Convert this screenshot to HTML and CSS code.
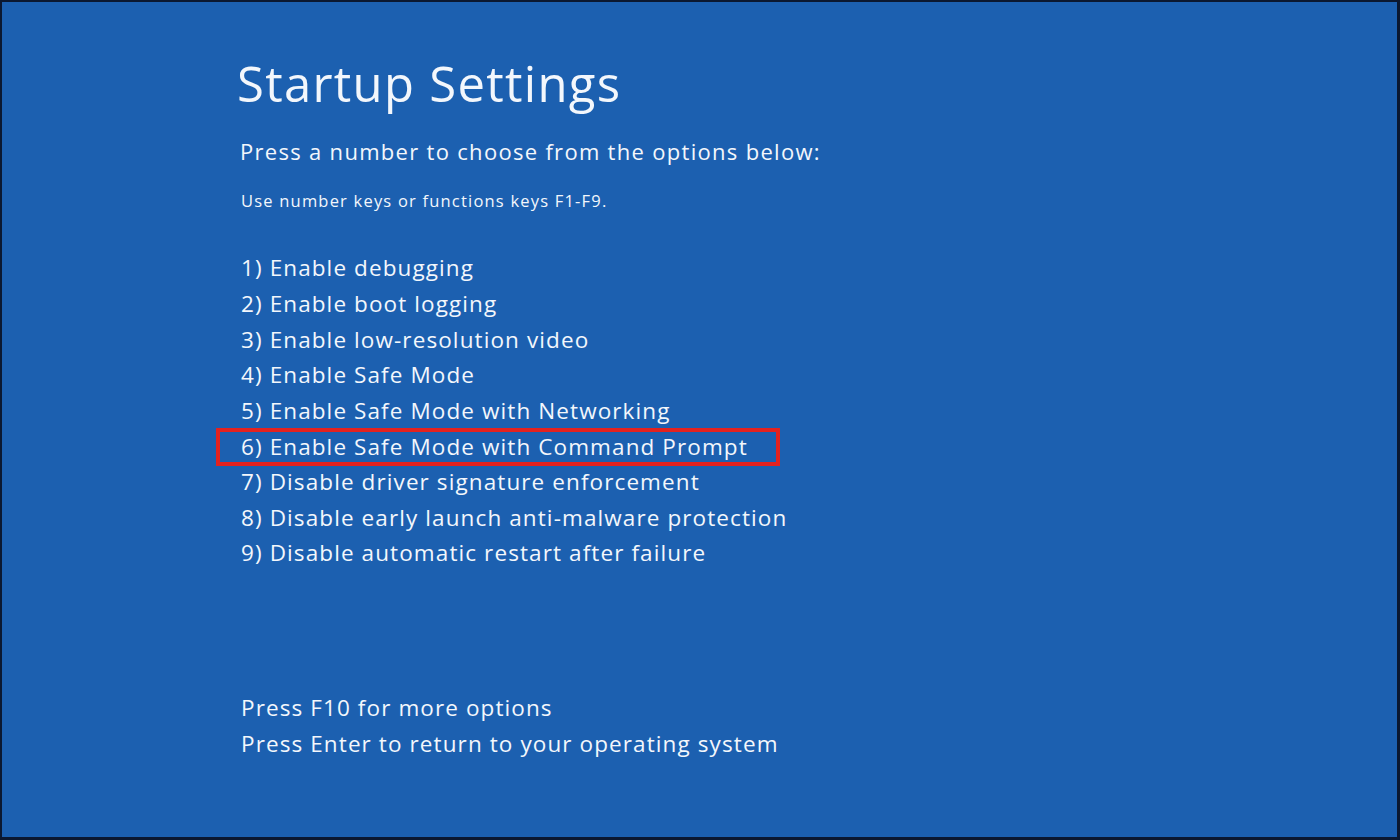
FILE: index.html
```html
<!DOCTYPE html>
<html lang="en">
<head>
    <meta charset="UTF-8">
    <meta name="viewport" content="width=device-width, initial-scale=1.0">
    <title>Startup Settings</title>
    <link rel="stylesheet" href="styles.css">
</head>
<body>
    <div class="pantalla">
        <h1 class="titulo">Startup Settings</h1>
        <p class="subtitulo">Press a number to choose from the options below:</p>
        <p class="nota">Use number keys or functions keys F1-F9.</p>
        <ul class="opciones">
            <li>1) Enable debugging</li>
            <li>2) Enable boot logging</li>
            <li>3) Enable low-resolution video</li>
            <li>4) Enable Safe Mode</li>
            <li>5) Enable Safe Mode with Networking</li>
            <li class="marcada"><span>6) Enable Safe Mode with Command Prompt</span></li>
            <li>7) Disable driver signature enforcement</li>
            <li>8) Disable early launch anti-malware protection</li>
            <li>9) Disable automatic restart after failure</li>
        </ul>
        <div class="pie">
            <p>Press F10 for more options</p>
            <p>Press Enter to return to your operating system</p>
        </div>
    </div>
</body>
</html>
```
FILE: styles.css
```css
* {
    box-sizing: border-box;
}
body {
    margin: 0;
    background: #0b1830;
    font-family: "Open Sans", "Noto Sans", sans-serif;
    color: #f3f7fc;
}
.pantalla {
    width: 1400px;
    height: 840px;
    background: #1c60b0;
    border: 2px solid #0b1830;
    border-bottom-width: 3px;
    border-right-width: 3px;
    padding: 51px 0 0 239px;
}
.titulo {
    margin: 0 0 0 -4px;
    font-size: 49px;
    font-weight: 400;
    line-height: 60px;
    letter-spacing: 1.3px;
}
.subtitulo {
    margin: 22.5px 0 0 -1px;
    font-size: 22px;
    line-height: 30px;
    letter-spacing: 1.3px;
}
.nota {
    margin: 24.8px 0 0 0;
    font-size: 16.5px;
    line-height: 22px;
    letter-spacing: 1.2px;
}
.opciones {
    list-style: none;
    margin: 38.2px 0 0 0;
    padding: 0;
    font-size: 22.5px;
    line-height: 35.6px;
    letter-spacing: 1.1px;
}
.opciones .marcada {
    height: 35.6px;
}
.opciones .marcada span {
    display: inline-block;
    vertical-align: top;
    margin: -0.5px 0 0 -25px;
    border: 4px solid #e3221f;
    padding: 0 28px 0.5px 21px;
    line-height: 29.5px;
}
.pie {
    margin-top: 119.4px;
    font-size: 22.5px;
    line-height: 36px;
    letter-spacing: 1.1px;
}
.pie p {
    margin: 0;
}
```
